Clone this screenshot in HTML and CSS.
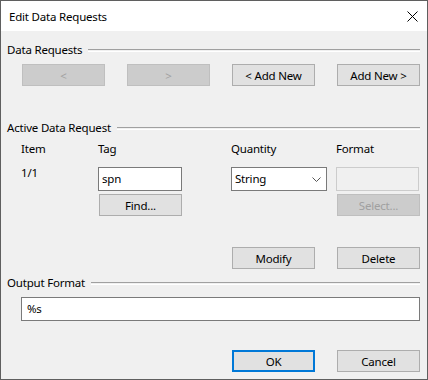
FILE: index.html
```html
<!DOCTYPE html>
<html lang="en">
<head>
    <meta charset="UTF-8">
    <title>Edit Data Requests</title>
    <link rel="stylesheet" href="styles.css">
</head>
<body>
    <div class="window">
        <div class="titlebar">
            <span class="title">Edit Data Requests</span>
            <svg class="close" width="11" height="11" viewBox="0 0 11 11">
                <path d="M0.5 0.5 L10.5 10.5 M10.5 0.5 L0.5 10.5" stroke="#000" stroke-width="1" fill="none"/>
            </svg>
        </div>

        <div class="client">
            <div class="group-head first">
                <span>Data Requests</span>
                <i class="rule"></i>
            </div>
            <div class="btn-row nav-row">
                <button class="btn" disabled>&lt;</button>
                <button class="btn" disabled>&gt;</button>
                <button class="btn">&lt; Add New</button>
                <button class="btn">Add New &gt;</button>
            </div>

            <div class="group-head active-head">
                <span>Active Data Request</span>
                <i class="rule"></i>
            </div>
            <div class="fields">
                <span class="col-label">Item</span>
                <span class="col-label">Tag</span>
                <span class="col-label">Quantity</span>
                <span class="col-label">Format</span>

                <span class="item-no">1/1</span>
                <div class="cell">
                    <div class="input tag-input">spn</div>
                    <button class="btn find-btn">Find...</button>
                </div>
                <div class="cell">
                    <div class="input combo">
                        <span>String</span>
                        <svg width="9" height="5" viewBox="0 0 9 5">
                            <path d="M0.5 0.5 L4.5 4.5 L8.5 0.5" stroke="#555" stroke-width="1" fill="none"/>
                        </svg>
                    </div>
                </div>
                <div class="cell">
                    <div class="input disabled-input"></div>
                    <button class="btn select-btn" disabled>Select...</button>
                </div>
            </div>

            <div class="btn-row modify-row">
                <button class="btn">Modify</button>
                <button class="btn">Delete</button>
            </div>

            <div class="group-head output-head">
                <span>Output Format</span>
                <i class="rule"></i>
            </div>
            <div class="input output-input">%s</div>

            <div class="btn-row ok-row">
                <button class="btn default-btn">OK</button>
                <button class="btn">Cancel</button>
            </div>
        </div>
    </div>
</body>
</html>
```

FILE: styles.css
```css
body {
    margin: 0;
    padding: 0;
    font-family: "Noto Sans", "Open Sans", sans-serif;
    font-size: 11.5px;
    letter-spacing: -0.2px;
    color: #000;
}
.window {
    width: 428px;
    height: 380px;
    box-sizing: border-box;
    border: 1px solid #5f5f5f;
    background: #f0f0f0;
    display: flex;
    flex-direction: column;
}
.titlebar {
    height: 30px;
    background: #fff;
    display: flex;
    align-items: center;
    justify-content: space-between;
    padding: 0 9px 0 8px;
}
.close {
    display: block;
}
.client {
    flex: 1;
    padding: 0 7px 0 6px;
    display: flex;
    flex-direction: column;
}

/* group box headings with the etched line */
.group-head {
    height: 16px;
    line-height: 16px;
    display: flex;
    align-items: center;
    gap: 6px;
}
.group-head span {
    white-space: nowrap;
}
.rule {
    flex: 1;
    height: 1px;
    border-top: 1px solid #a0a0a0;
    border-bottom: 1px solid #fff;
}
.group-head.first {
    margin-top: 11px;
}
.active-head {
    margin-top: 34px;
}
.output-head {
    margin-top: 6px;
}

/* buttons */
.btn {
    width: 83px;
    height: 22px;
    box-sizing: border-box;
    padding: 0;
    margin: 0;
    font-family: inherit;
    font-size: inherit;
    letter-spacing: inherit;
    color: #000;
    background: #e1e1e1;
    border: 1px solid #adadad;
    border-radius: 0;
}
.btn:disabled {
    background: #cccccc;
    border-color: #bfbfbf;
    color: #a0a0a0;
}
.default-btn {
    border: 2px solid #0078d7;
}
.btn-row {
    display: flex;
    justify-content: flex-end;
    gap: 22px;
}
.nav-row {
    margin-top: 6px;
}
.modify-row {
    margin-top: 31px;
}
.ok-row {
    margin-top: 29px;
}

/* active request fields */
.fields {
    margin-top: 5px;
    margin-left: 14px;
    display: grid;
    grid-template-columns: 77px 133px 105px 84px;
    row-gap: 10px;
}
.col-label {
    line-height: 16px;
}
.item-no {
    line-height: 16px;
    margin-top: -2px;
}
.cell {
    display: flex;
    flex-direction: column;
    align-items: flex-start;
    gap: 3px;
}
.input {
    height: 24px;
    box-sizing: border-box;
    background: #fff;
    border: 1px solid #7a7a7a;
    line-height: 22px;
    padding: 0 4px;
}
.tag-input {
    width: 84px;
    padding-left: 3px;
}
.find-btn {
    margin-left: 1px;
}
.combo {
    width: 96px;
    display: flex;
    align-items: center;
    justify-content: space-between;
    padding: 0 5px 0 3px;
}
.combo svg {
    display: block;
}
.disabled-input {
    width: 83px;
    background: #f0f0f0;
    border-color: #cccccc;
}
.select-btn {
    margin-left: 1px;
}
.output-input {
    margin-top: 6px;
    margin-left: 14px;
    padding-left: 5px;
}
```
